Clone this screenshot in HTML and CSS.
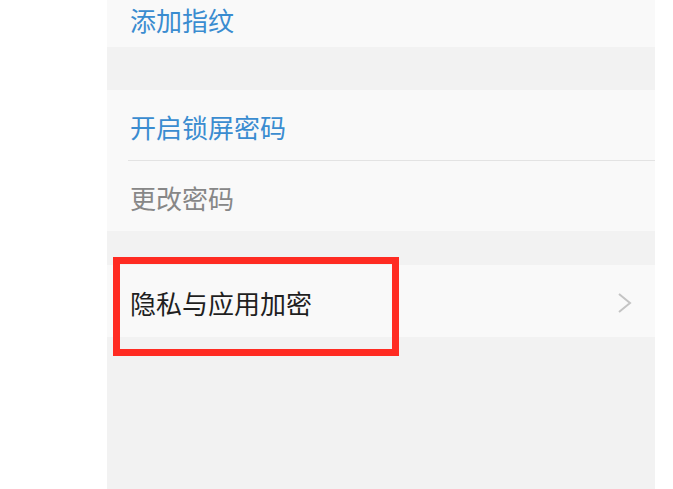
FILE: index.html
```html
<!DOCTYPE html>
<html lang="zh-CN">
<head>
    <meta charset="UTF-8">
    <meta name="viewport" content="width=device-width, initial-scale=1.0">
    <title>密码与安全</title>
    <link rel="stylesheet" href="styles.css">
</head>
<body>
    <div class="screen">
        <div class="group group-top">
            <div class="row row-cut"><span class="label blue">添加指纹</span></div>
        </div>
        <div class="group group-lock">
            <div class="row"><span class="label blue">开启锁屏密码</span></div>
            <div class="row"><span class="label grey">更改密码</span></div>
        </div>
        <div class="group group-privacy">
            <div class="row row-link">
                <span class="label dark">隐私与应用加密</span>
                <svg class="chevron" width="16" height="22" viewBox="0 0 16 22">
                    <polyline points="2,2 13,11 2,20" fill="none" stroke="#c4c4c4" stroke-width="2"/>
                </svg>
            </div>
        </div>
    </div>
    <div class="highlight"></div>
</body>
</html>
```

FILE: styles.css
```css
body {
    margin: 0;
    background: #ffffff;
    font-family: "Noto Sans CJK SC", "Noto Sans", sans-serif;
    overflow: hidden;
}
.screen {
    margin-left: 107px;
    width: 548px;
    height: 489px;
    background: #f2f2f2;
}
.group {
    background: #f9f9f9;
    padding-left: 21px;
}
.group-lock {
    margin-top: 43px;
}
.group-privacy {
    margin-top: 34px;
}
.row {
    height: 70px;
    display: flex;
    align-items: center;
    padding-left: 2px;
    padding-right: 22px;
}
.row + .row {
    border-top: 1px solid #e3e3e3;
}
.row-cut {
    height: 47px;
    align-items: flex-start;
}
.row-cut .label {
    margin-top: 2px;
}
.row-link {
    height: 72px;
    justify-content: space-between;
}
.label {
    font-size: 26px;
    line-height: 30px;
    padding-top: 3px;
}
.blue {
    color: #3a8cd0;
}
.grey {
    color: #878787;
}
.dark {
    color: #1f1f1f;
}
.chevron {
    display: block;
    margin-top: 4px;
}
.highlight {
    position: absolute;
    left: 113px;
    top: 257px;
    width: 286px;
    height: 99px;
    box-sizing: border-box;
    border: 7px solid #ff2b22;
}
```
